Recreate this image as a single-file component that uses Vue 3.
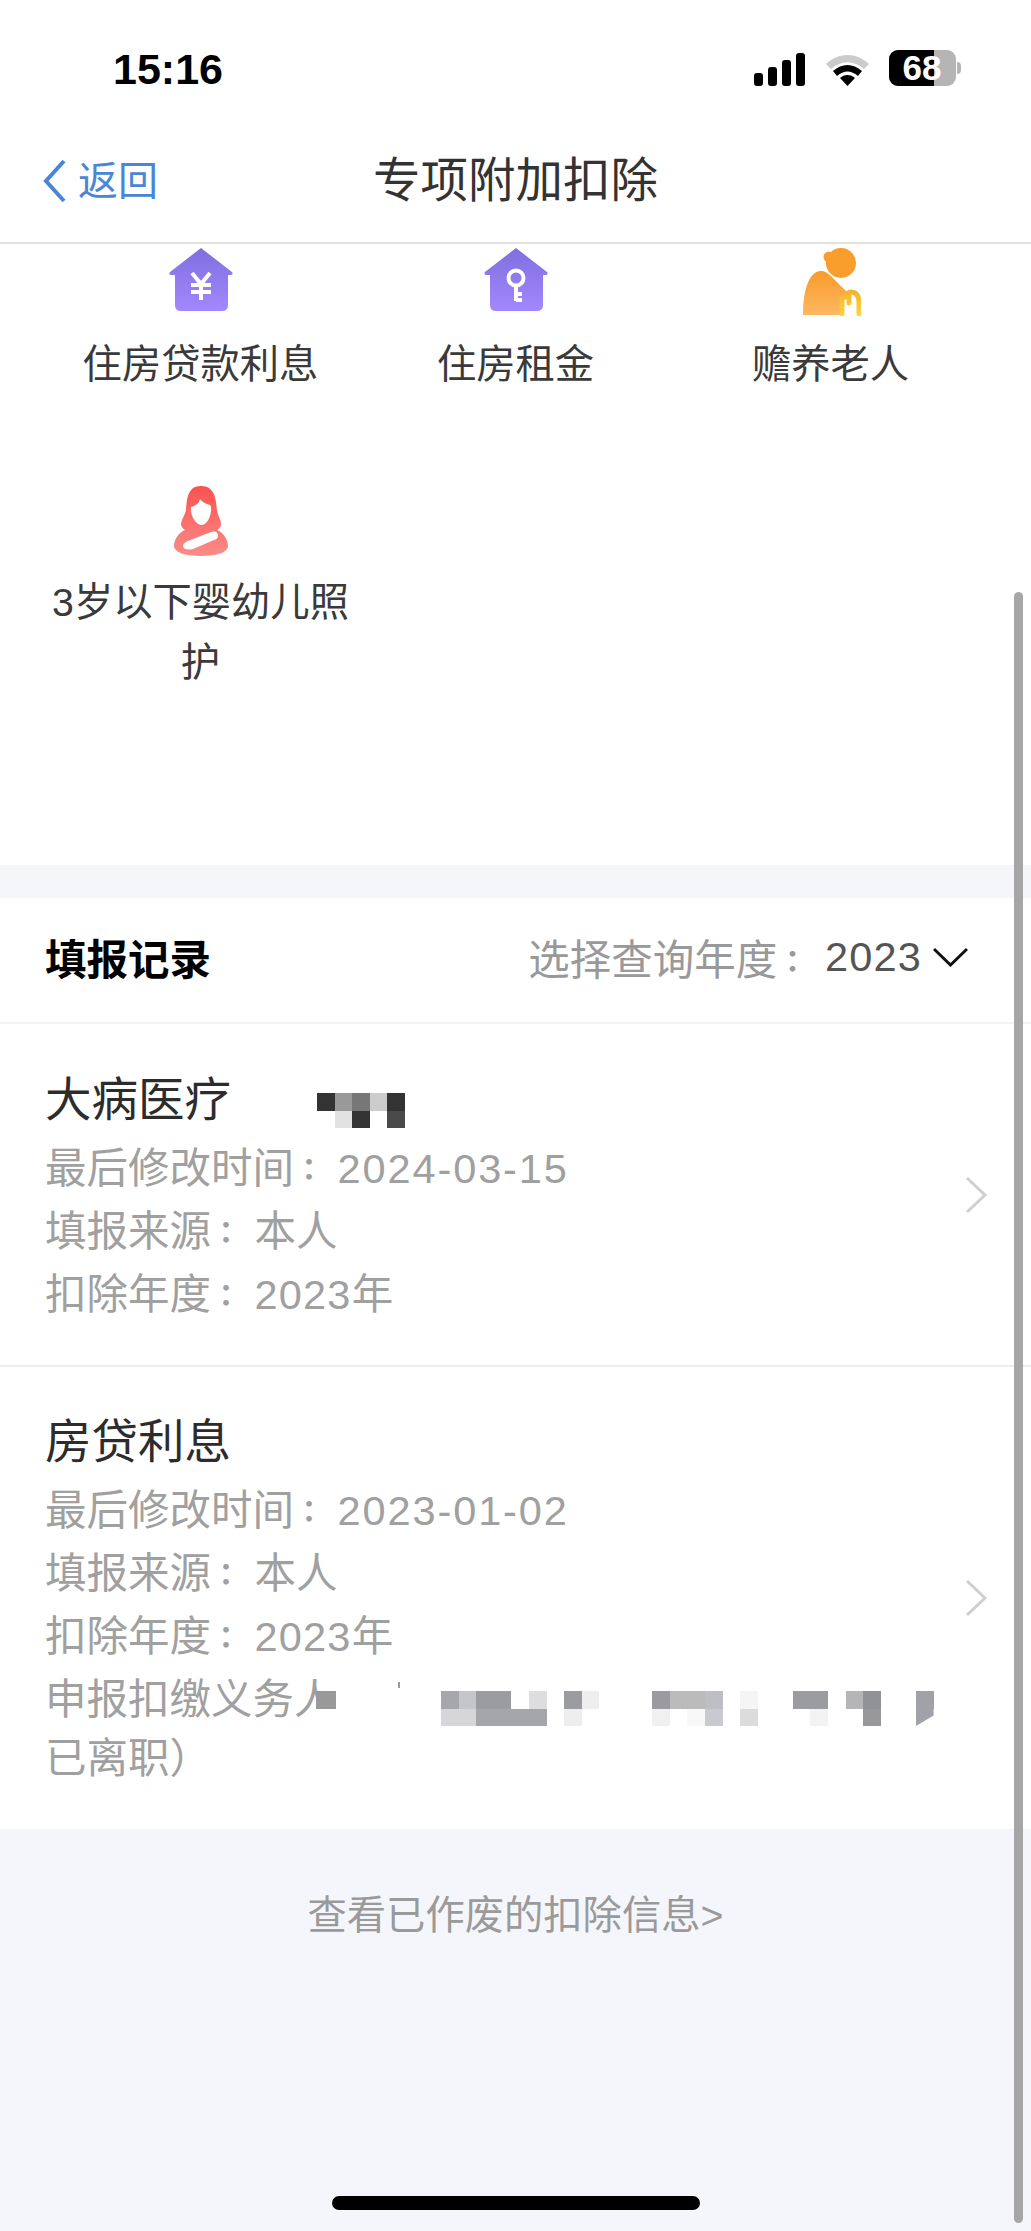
<script setup>
const grid1 = [
  ['#333','#999','#777','#ccc','#333'],
  ['#fff','#e2e2e2','#333','#fff','#4a4a4a'],
];
const grid2 = [
  ['#a5a7ab','#c5c6c9','#9a9ca0','#9a9ca0','#fff','#dddde0','#fff','#9a9ca2','#eee','#fff','#fff','#fff','#9a9a9f','#bbb','#bbb','#bdbfc4','#fff','#f5f5f5','#fff','#fff','#9a9ca0','#9a9ca0','#fff','#b5b5b7','#909296','#fff','#fff','#a0a2a7'],
  ['#d5d5da','#d5d5da','#a5a6aa','#a5a6aa','#a5a6aa','#a5a6aa','#fff','#eee','#fff','#fff','#fff','#fff','#f0f0f0','#fff','#f8f8f8','#c8cad0','#fff','#dcdcdc','#fff','#fff','#fff','#f3f3f3','#fff','#fff','#98989c','#fff','#fff','#a0a2a7'],
];
</script>

<template>
  <div class="page">
    <div class="status">
      <span class="time">15:16</span>
      <div class="sys">
        <svg class="signal" width="51" height="33" viewBox="0 0 51 33">
          <rect x="0" y="20" width="9" height="13" rx="3"/>
          <rect x="14" y="14" width="9" height="19" rx="3"/>
          <rect x="28" y="7" width="9" height="26" rx="3"/>
          <rect x="42" y="0" width="9" height="33" rx="3"/>
        </svg>
        <svg class="wifi" width="45" height="33" viewBox="0 0 45 33">
          <path d="M1 11 C14 -1 31 -1 44 11 L39 16 C29 7 16 7 6 16 Z" fill="#cbcbcb"/>
          <path d="M8 18 C17 10 28 10 37 18 L33 23 C26 17 19 17 12 23 Z" fill="#000"/>
          <path d="M15 25 C19 21 26 21 30 25 L22.500 33 Z" fill="#000"/>
        </svg>
        <div class="battery">
          <div class="level"></div>
          <span class="pct">68</span>
          <i class="nub"></i>
        </div>
      </div>
    </div>

    <div class="nav">
      <div class="back">
        <svg width="25" height="44" viewBox="0 0 25 44"><path d="M22 2 L4 22 L22 42" fill="none" stroke="#4a86d6" stroke-width="4"/></svg>
        <span>返回</span>
      </div>
      <h1 class="title">专项附加扣除</h1>
    </div>

    <div class="grid">
      <div class="cell">
        <div class="ico">
          <svg width="64" height="64" viewBox="0 0 64 64">
            <defs><linearGradient id="p1" x1="0" y1="0" x2="0" y2="1"><stop offset="0" stop-color="#7f6fdf"/><stop offset="1" stop-color="#a288ff"/></linearGradient></defs>
            <path d="M32 0 L63 24 Q65 27 61 27 L59 27 L59 57 Q59 63 53 63 L12 63 Q6 63 6 57 L6 27 L3 27 Q-1 27 1 24 Z" fill="url(#p1)"/>
            <path d="M23 25 L32 36 L41 25 M22 37 H42 M22 44 H42 M32 36 V52" fill="none" stroke="#fff" stroke-width="4"/>
          </svg>
        </div>
        <div class="label">住房贷款利息</div>
      </div>
      <div class="cell">
        <div class="ico">
          <svg width="64" height="64" viewBox="0 0 64 64">
            <defs><linearGradient id="p2" x1="0" y1="0" x2="0" y2="1"><stop offset="0" stop-color="#7f6fdf"/><stop offset="1" stop-color="#a288ff"/></linearGradient></defs>
            <path d="M32 0 L63 24 Q65 27 61 27 L59 27 L59 57 Q59 63 53 63 L12 63 Q6 63 6 57 L6 27 L3 27 Q-1 27 1 24 Z" fill="url(#p2)"/>
            <circle cx="32" cy="30" r="7.500" fill="none" stroke="#fff" stroke-width="4"/>
            <path d="M32 38 V53 M32 46 H38 M32 52 H38" fill="none" stroke="#fff" stroke-width="4"/>
          </svg>
        </div>
        <div class="label">住房租金</div>
      </div>
      <div class="cell">
        <div class="ico">
          <svg width="60" height="68" viewBox="0 0 60 68">
            <defs>
              <linearGradient id="o1" x1="0" y1="0" x2="0" y2="1"><stop offset="0" stop-color="#f99a2a"/><stop offset="1" stop-color="#fdb862"/></linearGradient>
              <linearGradient id="o2" x1="0" y1="0" x2="0" y2="1"><stop offset="0" stop-color="#f6b42e"/><stop offset="1" stop-color="#fdd13e"/></linearGradient>
            </defs>
            <circle cx="40" cy="15" r="15" fill="#f99d2d"/>
            <circle cx="28" cy="9" r="5.500" fill="#f99d2d"/>
            <path d="M2 67 C2 40 9 22 21 23 C29 24 36 36 49 46 L45 52 L40 49 L40 67 Z" fill="url(#o1)"/>
            <path d="M41 66 V51 Q47 43 51 44 Q58 45 58 55 V66 M48 46 V55" fill="none" stroke="url(#o2)" stroke-width="5" stroke-linecap="round"/>
          </svg>
        </div>
        <div class="label">赡养老人</div>
      </div>
      <div class="cell">
        <div class="ico">
          <svg width="54" height="70" viewBox="0 0 54 70">
            <defs><linearGradient id="r1" x1="0" y1="0" x2="0" y2="1"><stop offset="0" stop-color="#f9524f"/><stop offset="1" stop-color="#fb8c88"/></linearGradient></defs>
            <path d="M27 0 C41 0 42 14 43 24 C44 30 47 34 47 38 C47 41 45 43 43 44 C50 47 54 54 54 60 C54 66 44 70 27 70 C10 70 0 66 0 60 C0 54 4 47 11 44 C8 42 7 40 7 38 C8 32 11 29 12 24 C13 14 13 0 27 0 Z" fill="url(#r1)"/>
            <path d="M26 13 C30 18 35 18 37 20 C38 30 33 39 28 39 C22 39 16 30 17 21 C21 20 25 18 26 13 Z" fill="#fff"/>
            <path d="M14 55 L37 46 Q44 44 44 50 Q44 53 40 54 L19 63 Q10 65 9 60 Q9 57 14 55 Z" fill="#fff"/>
          </svg>
        </div>
        <div class="label">3岁以下婴幼儿照护</div>
      </div>
    </div>

    <div class="band"></div>

    <div class="head">
      <span class="head-t">填报记录</span>
      <div class="year">
        <span class="year-l">选择查询年度<span class="colon">：</span></span>
        <span class="num year-n">2023</span>
        <svg width="35" height="20" viewBox="0 0 35 20"><path d="M1 2 L17.500 18 L34 2" fill="none" stroke="#111" stroke-width="3"/></svg>
      </div>
    </div>

    <div class="rec first">
      <div class="rec-t">大病医疗
        <div class="mos mos1">
          <div v-for="(row, r) in grid1" :key="r" class="mrow">
            <i v-for="(c, k) in row" :key="k" class="m" :style="{ background: c }"></i>
          </div>
        </div>
      </div>
      <div class="ln">最后修改时间<span class="colon">：</span><span class="num date">2024-03-15</span></div>
      <div class="ln">填报来源<span class="colon">：</span>本人</div>
      <div class="ln">扣除年度<span class="colon">：</span><span class="num">2023</span>年</div>
      <svg class="chev c1" width="23" height="38" viewBox="0 0 23 38"><path d="M2 2 L20 19 L2 36" fill="none" stroke="#cfcfcf" stroke-width="3"/></svg>
    </div>

    <div class="rec second">
      <div class="rec-t">房贷利息</div>
      <div class="ln">最后修改时间<span class="colon">：</span><span class="num date">2023-01-02</span></div>
      <div class="ln">填报来源<span class="colon">：</span>本人</div>
      <div class="ln">扣除年度<span class="colon">：</span><span class="num">2023</span>年</div>
      <div class="ln wrap">申报扣缴义务人<br>已离职）
        <i class="mask"></i>
        <i class="tick"></i>
        <div class="mos mos2">
          <div v-for="(row, r) in grid2" :key="r" class="mrow">
            <i v-for="(c, k) in row" :key="k" class="m" :style="{ background: c }"></i>
          </div>
        </div>
      </div>
      <svg class="chev c2" width="23" height="38" viewBox="0 0 23 38"><path d="M2 2 L20 19 L2 36" fill="none" stroke="#cfcfcf" stroke-width="3"/></svg>
    </div>

    <div class="foot">
      <div class="foot-t">查看已作废的扣除信息&gt;</div>
    </div>

    <div class="scroll"></div>
    <div class="home"></div>
  </div>
</template>

<style>
html, body { margin: 0; background: #fff; }
</style>

<style scoped>
.page {
  position: relative;
  width: 1031px;
  height: 2231px;
  overflow: hidden;
  background: #fff;
  font-family: "Liberation Sans", "Noto Sans CJK SC", sans-serif;
  color: #333;
}
.status {
  height: 135px;
  display: flex;
  justify-content: space-between;
  align-items: flex-start;
  padding: 0 75px 0 113px;
  box-sizing: border-box;
}
.time {
  margin-top: 44px;
  font-size: 43px;
  line-height: 50px;
  font-weight: 700;
  color: #000;
}
.sys { display: flex; align-items: center; margin-top: 50px; }
.signal { margin-top: 2px; }
.wifi { margin: 2px 0 0 20px; }
.battery {
  position: relative;
  width: 67px;
  height: 36px;
  margin-left: 19px;
  border-radius: 9px;
  background: #b5b5b5;
}
.level {
  position: absolute;
  inset: 0 22px 0 0;
  background: #000;
  border-radius: 9px 0 0 9px;
}
.pct {
  position: relative;
  display: block;
  text-align: center;
  padding-right: 1px;
  font-size: 35px;
  line-height: 36px;
  font-weight: 700;
  color: #fff;
}
.nub {
  position: absolute;
  right: -5px;
  top: 12px;
  width: 4px;
  height: 12px;
  border-radius: 0 4px 4px 0;
  background: #b5b5b5;
}
.nav {
  position: relative;
  height: 109px;
  box-sizing: border-box;
  border-bottom: 2px solid #e2e2e2;
  display: flex;
  justify-content: center;
}
.back {
  position: absolute;
  left: 42px;
  top: 22px;
  display: flex;
  align-items: center;
  gap: 11px;
  color: #4a86d6;
  font-size: 40px;
  line-height: 48px;
}
.title {
  margin: 16px 0 0;
  font-size: 47.500px;
  line-height: 60px;
  font-weight: 400;
  color: #333;
}
.grid {
  display: grid;
  grid-template-columns: repeat(3, 315px);
  row-gap: 92px;
  padding: 4px 43px 173px;
}
.cell {
  display: flex;
  flex-direction: column;
  align-items: center;
}
.ico {
  height: 70px;
  display: flex;
  align-items: flex-start;
  justify-content: center;
}
.label {
  margin-top: 16px;
  max-width: 300px;
  text-align: center;
  font-size: 39.300px;
  line-height: 60px;
  color: #3a3a3a;
}
.band { height: 33px; background: #f5f6fa; }
.head {
  height: 126px;
  box-sizing: border-box;
  padding: 0 63px 6px 45px;
  border-bottom: 2px solid #f3f3f3;
  display: flex;
  justify-content: space-between;
  align-items: center;
}
.head-t { font-size: 41.500px; font-weight: 700; color: #000; }
.year { display: flex; align-items: center; }
.year-l { font-size: 41.500px; color: #999; }
.year-n { font-size: 41.500px; color: #555; margin-left: 4px; letter-spacing: 1.200px; }
.year svg { margin-left: 11px; }
.colon {
  font-family: "Noto Sans CJK TC", sans-serif;
  font-size: 30px;
  font-weight: 700;
  line-height: 0;
  vertical-align: 3px;
  margin-right: 13.500px;
}
.num { font-family: "Liberation Sans", sans-serif; letter-spacing: 1.200px; }
.date { letter-spacing: 1.900px; }
.rec {
  position: relative;
  padding-left: 45px;
  background: #fff;
}
.first { height: 343px; box-sizing: border-box; padding-top: 43px; border-bottom: 2px solid #eee; }
.second { height: 462px; box-sizing: border-box; padding-top: 42px; }
.rec-t {
  position: relative;
  font-size: 46.500px;
  line-height: 66px;
  color: #2c2c2c;
  margin-bottom: 4px;
}
.ln {
  font-size: 41.500px;
  line-height: 63px;
  color: #a0a0a0;
}
.wrap { position: relative; margin-top: 2px; line-height: 59px; }
.mos { position: absolute; display: flex; flex-direction: column; }
.mos1 { left: 272px; top: 26px; }
.mos1 .m { width: 17.600px; height: 17.700px; }
.mos2 { left: 396px; top: 21px; }
.mos2 .m { width: 17.600px; height: 17.500px; }
.mos2 .mrow:last-child .m:last-child { clip-path: polygon(0 0, 100% 0, 100% 40%, 0 100%); }
.mrow { display: flex; }
.m { display: block; flex: none; }
.mask {
  position: absolute;
  left: 271px;
  top: 21px;
  width: 20px;
  height: 48px;
  background: linear-gradient(#999 0 18px, #fff 18px);
}
.tick {
  position: absolute;
  left: 353px;
  top: 12px;
  width: 2px;
  height: 6px;
  background: #999;
}
.chev { position: absolute; left: 965px; }
.c1 { top: 152px; }
.c2 { top: 212px; }
.foot {
  height: 405px;
  background: #f5f6fb;
}
.foot-t {
  padding-top: 62px;
  text-align: center;
  font-size: 39.300px;
  line-height: 48px;
  color: #9a9a9a;
}
.scroll {
  position: absolute;
  left: 1014px;
  top: 592px;
  width: 9px;
  height: 1631px;
  border-radius: 4.500px;
  background: #a6a6a6;
}
.home {
  position: absolute;
  left: 332px;
  top: 2196px;
  width: 368px;
  height: 14px;
  border-radius: 7px;
  background: #000;
}
</style>
